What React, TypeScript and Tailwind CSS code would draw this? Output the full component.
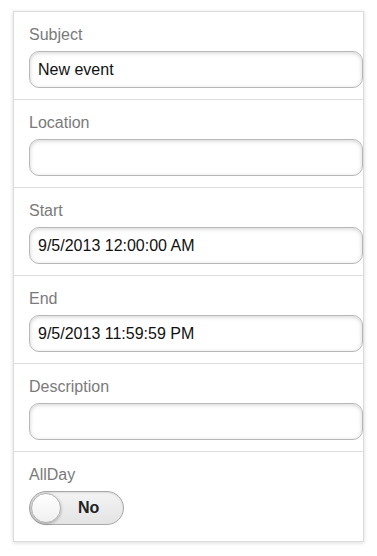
import React from "react";

const fields = [
  { label: "Subject", value: "New event" },
  { label: "Location", value: "" },
  { label: "Start", value: "9/5/2013 12:00:00 AM" },
  { label: "End", value: "9/5/2013 11:59:59 PM" },
  { label: "Description", value: "" },
];

function Field({ label, value }: { label: string; value: string }) {
  return (
    <div className="border-b border-[#dcdcdc] pl-[15px] pt-[13px] pb-[11px]">
      <div className="h-5 text-[16px] leading-5 text-[#7a7a7a]">{label}</div>
      <div className="mt-[6px] flex h-[37px] items-center rounded-[10px] border border-[#b8b8b8] bg-white pl-2 text-[16px] text-[#111] shadow-[inset_0_1px_4px_rgba(0,0,0,0.18)]">
        {value}
      </div>
    </div>
  );
}

export default function App() {
  return (
    <div className="h-[556px] w-[377px] bg-white pl-[13px] pt-[11px] font-['Liberation_Sans',Arial,sans-serif]">
      <div className="w-[351px] overflow-hidden border border-[#dcdcdc] bg-white shadow-[0_1px_4px_rgba(0,0,0,0.15)]">
        {fields.map((f) => (
          <Field key={f.label} label={f.label} value={f.value} />
        ))}
        <div className="pl-[15px] pt-[13px] pb-[16px]">
          <div className="h-5 text-[16px] leading-5 text-[#7a7a7a]">AllDay</div>
          <div className="mt-[6px] flex h-[34px] w-[95px] items-center rounded-full border border-[#a8a8a8] bg-[linear-gradient(#f4f4f4,#e4e4e4)] shadow-[inset_0_1px_2px_rgba(0,0,0,0.1)]">
            <div className="ml-px h-[30px] w-[30px] rounded-full border border-[#b0b0b0] bg-[linear-gradient(#ffffff,#f0f0f0)] shadow-[0_1px_3px_rgba(0,0,0,0.3)]" />
            <span className="ml-[17px] text-[16px] font-bold text-[#222]">No</span>
          </div>
        </div>
      </div>
    </div>
  );
}
